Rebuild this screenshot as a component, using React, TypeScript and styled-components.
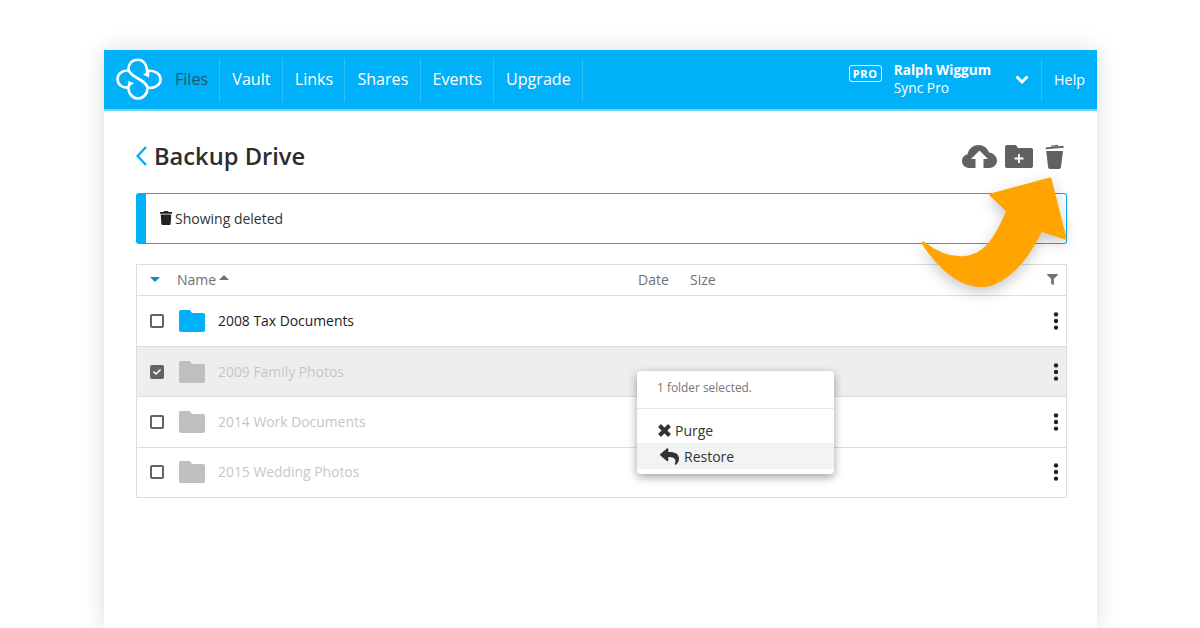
import React from 'react'
import styled, { createGlobalStyle } from 'styled-components'
import { FaCheck, FaFilter, FaReply, FaTrash } from 'react-icons/fa'

const GlobalStyle = createGlobalStyle`
  html, body {
    margin: 0;
    height: 628px;
    overflow: hidden;
    background: #ffffff;
    font-family: "Open Sans", "Liberation Sans", sans-serif;
  }
`

const Frame = styled.div`
  position: relative;
  width: 993px;
  height: 578px;
  margin: 50px 0 0 104px;
  background: #ffffff;
  box-shadow: 0 0 22px rgba(0, 0, 0, 0.14);
`

const Header = styled.header`
  display: flex;
  align-items: center;
  box-sizing: content-box;
  height: 59px;
  background: #00b0f8;
  border-bottom: 2px solid #6fd3fb;
  padding-left: 12px;
`

const Logo = styled.svg`
  width: 47px;
  height: 46px;
  margin-right: 12px;
  flex: none;
`

const NavItem = styled.a<{ $active?: boolean }>`
  display: flex;
  align-items: center;
  height: 44px;
  padding: 0 11.2px 1px 12px;
  box-sizing: border-box;
  border-right: 1px solid #2cc0fa;
  font-size: 16.1px;
  color: ${p => (p.$active ? '#24566f' : '#ffffff')};
  &:first-of-type {
    padding-left: 0;
  }
`

const Spacer = styled.div`
  flex: 1;
`

const ProBadge = styled.span`
  display: flex;
  align-items: center;
  justify-content: center;
  width: 33px;
  height: 17px;
  box-sizing: border-box;
  border: 1px solid #ffffff;
  border-radius: 3px;
  font-size: 11px;
  font-weight: 700;
  letter-spacing: 0.6px;
  color: #ffffff;
  margin: 0 12px 13px 0;
`

const User = styled.div`
  display: flex;
  flex-direction: column;
  color: #ffffff;
  margin-right: 24px;
  margin-bottom: 1px;
`

const UserName = styled.span`
  font-size: 13.6px;
  font-weight: 700;
  line-height: 18px;
`

const UserPlan = styled.span`
  font-size: 13.8px;
  line-height: 18px;
`

const Caret = styled.svg`
  width: 14px;
  height: 10px;
  margin-right: 12px;
`

const HelpLink = styled.a`
  display: flex;
  align-items: center;
  height: 44px;
  padding: 0 12px 1px 12px;
  box-sizing: border-box;
  border-left: 1px solid #2cc0fa;
  font-size: 14.3px;
  color: #ffffff;
`

const Content = styled.main`
  padding: 25px 30px 0 32px;
`

const TitleRow = styled.div`
  display: flex;
  align-items: center;
  justify-content: space-between;
  height: 41px;
  margin-bottom: 16px;
`

const Title = styled.h1`
  display: flex;
  align-items: center;
  gap: 7px;
  margin: 0 0 2px;
  font-size: 23.7px;
  font-weight: 600;
  color: #2d2d2d;
`

const Actions = styled.div`
  display: flex;
  align-items: center;
  margin-right: 3px;
  color: #616161;
`

const CloudIcon = styled.svg`
  width: 35px;
  height: 23px;
  margin-right: 8px;
`

const AddFolderIcon = styled.svg`
  width: 28px;
  height: 23px;
  margin-right: 12px;
`

const TrashIcon = styled.svg`
  width: 19px;
  height: 25px;
`

const Banner = styled.div`
  display: flex;
  align-items: center;
  gap: 2px;
  height: 51px;
  box-sizing: border-box;
  padding: 0 0 1px 13px;
  border: 1px solid #00b0f8;
  border-left: 10px solid #00b0f8;
  border-radius: 3px;
  font-size: 14px;
  color: #333333;
  margin-bottom: 20px;
`

const Table = styled.div`
  border: 1px solid #dddddd;
  color: #333333;
`

const HeadRow = styled.div`
  display: grid;
  grid-template-columns: 40px 461px 52px 1fr 19px;
  align-items: center;
  height: 30.5px;
  box-sizing: border-box;
  border-bottom: 1px solid #dddddd;
  font-size: 14px;
  color: #6f7174;
`

const HeadToggle = styled.span`
  justify-self: center;
  width: 0;
  height: 0;
  margin: 0 5px 0 0;
  border-left: 5px solid transparent;
  border-right: 5px solid transparent;
  border-top: 5px solid #0a8bd0;
`

const NameHead = styled.span`
  display: flex;
  align-items: center;
  gap: 3px;
`

const SortUp = styled.span`
  width: 0;
  height: 0;
  margin-bottom: 5px;
  border-left: 5px solid transparent;
  border-right: 5px solid transparent;
  border-bottom: 5px solid #6f7174;
`

const Rows = styled.div``

const Row = styled.div<{ $selected?: boolean }>`
  display: flex;
  align-items: center;
  height: 50.4px;
  box-sizing: border-box;
  padding: 0 2px 0 13px;
  border-top: 1px solid #dddddd;
  background: ${p => (p.$selected ? '#eeeeee' : '#ffffff')};
  &:first-of-type {
    border-top: none;
  }
`

const Check = styled.span<{ $checked?: boolean }>`
  display: flex;
  align-items: center;
  justify-content: center;
  width: 14px;
  height: 14px;
  box-sizing: border-box;
  border: 2px solid #636363;
  border-radius: 2px;
  background: ${p => (p.$checked ? '#636363' : '#ffffff')};
  color: #ffffff;
  margin-right: 15px;
`

const FolderIcon = styled.svg<{ $muted?: boolean }>`
  width: 26px;
  height: 22px;
  color: ${p => (p.$muted ? '#bfbfbf' : '#00b0f8')};
  margin-right: 13px;
`

const FileName = styled.span<{ $muted?: boolean }>`
  flex: 1;
  margin-bottom: 1px;
  font-size: 13.9px;
  color: ${p => (p.$muted ? '#c6c6c6' : '#222222')};
`

const RowMenu = styled.svg`
  width: 16px;
  height: 18px;
  color: #222222;
`

const Menu = styled.div`
  position: absolute;
  left: 533px;
  top: 321px;
  width: 197px;
  height: 103px;
  background: #ffffff;
  border-radius: 4px;
  box-shadow: 0 3px 10px rgba(0, 0, 0, 0.38);
`

const MenuNote = styled.div`
  display: flex;
  align-items: center;
  height: 37px;
  box-sizing: content-box;
  padding: 0 20px;
  border-bottom: 1px solid #e6e6e6;
  font-size: 11.9px;
  color: #777777;
  span {
    margin-bottom: 5px;
  }
`

const MenuList = styled.div`
  padding-top: 8px;
`

const MenuItem = styled.div<{ $hover?: boolean; $inset: number; $gap: number }>`
  display: flex;
  align-items: center;
  gap: ${p => p.$gap}px;
  height: 26px;
  box-sizing: border-box;
  padding-left: ${p => p.$inset}px;
  font-size: 14px;
  color: #333333;
  background: ${p => (p.$hover ? '#f3f3f3' : 'transparent')};
`

const Arrow = styled.svg`
  position: absolute;
  left: 800px;
  top: 110px;
  width: 190px;
  height: 140px;
  overflow: visible;
  filter: drop-shadow(0 5px 7px rgba(0, 0, 0, 0.22));
`

const SyncLogo = () => (
  <Logo viewBox="0 0 47 46" fill="none" stroke="#fff" strokeWidth="2.6">
    <path d="M31 18 C32 8 27.5 2.7 21.7 2.7 C16 2.7 12.5 7 12.5 12 C12.5 20 31.5 23 31.5 31 C31.5 37 27 41.5 22 41.5 C17 41.5 12.5 37 12.5 31 C12.5 29 13 27.5 14 26" />
    <path d="M12.5 13.5 C6 13 1.5 17 1.5 22 C1.5 27 6 31.5 12.5 30.5" />
    <path d="M31 14 C37 13 44.5 16 44.5 22.5 C44.5 28 38 32 31.5 30.5" />
    <path fill="#fff" stroke="none" d="M12 24 L18 26 L13.5 29.5 Z M27 17.5 L33.5 14.5 L33 20.5 Z" />
  </Logo>
)

const Folder = ({ muted }: { muted?: boolean }) => (
  <FolderIcon $muted={muted} viewBox="0 0 26 22" fill="currentColor">
    <path d="M2 0 H10 C11 0 11.6 .6 12 1.4 L13 3 H24 C25.2 3 26 3.8 26 5 V20 C26 21.2 25.2 22 24 22 H2 C.8 22 0 21.2 0 20 V2 C0 .8 .8 0 2 0 Z" />
  </FolderIcon>
)

const PurgeIcon = () => (
  <svg width="13" height="13" viewBox="0 0 13 13" fill="none" stroke="#333" strokeWidth="4">
    <path d="M1.5 1.5 L11.5 11.5 M11.5 1.5 L1.5 11.5" />
  </svg>
)

const rows = [
  { name: '2008 Tax Documents' },
  { name: '2009 Family Photos', muted: true, selected: true },
  { name: '2014 Work Documents', muted: true },
  { name: '2015 Wedding Photos', muted: true },
]

const navItems = ['Vault', 'Links', 'Shares', 'Events', 'Upgrade']

export default function App() {
  return (
    <>
      <GlobalStyle />
      <Frame>
        <Header>
          <SyncLogo />
          <NavItem $active>Files</NavItem>
          {navItems.map(item => (
            <NavItem key={item}>{item}</NavItem>
          ))}
          <Spacer />
          <ProBadge>PRO</ProBadge>
          <User>
            <UserName>Ralph Wiggum</UserName>
            <UserPlan>Sync Pro</UserPlan>
          </User>
          <Caret viewBox="0 0 14 10" fill="none" stroke="#fff" strokeWidth="3">
            <path d="M1.5 1.5 L7 7 L12.5 1.5" />
          </Caret>
          <HelpLink>Help</HelpLink>
        </Header>
        <Content>
          <TitleRow>
            <Title>
              <svg width="11" height="20" viewBox="0 0 11 20" fill="none" stroke="#00b0f8" strokeWidth="2.4">
                <path d="M10 1 L1.6 10 L10 19" />
              </svg>
              Backup Drive
            </Title>
            <Actions>
              <CloudIcon viewBox="0 0 35 23">
                <path
                  fill="currentColor"
                  d="M7.5 23 C3 23 0 19.8 0 16 C0 12.6 2.4 9.8 5.6 9.2 C6.4 4 11 0 16.5 0 C21.4 0 25.4 3 27 7.4 C31.4 7.8 35 11.4 35 15.6 C35 19.8 31.6 23 27.5 23 Z"
                />
                <path fill="#fff" d="M17.5 5.5 L26 14 H21.5 V23 H13.5 V14 H9 Z" />
              </CloudIcon>
              <AddFolderIcon viewBox="0 0 28 23">
                <path
                  fill="currentColor"
                  d="M2 0 H10 C11 0 11.6 .6 12 1.4 L13 3 H26 C27.2 3 28 3.8 28 5 V21 C28 22.2 27.2 23 26 23 H2 C.8 23 0 22.2 0 21 V2 C0 .8 .8 0 2 0 Z"
                />
                <path stroke="#fff" strokeWidth="1.8" d="M14 9 V18 M9.5 13.5 H18.5" />
              </AddFolderIcon>
              <TrashIcon viewBox="0 0 19 25" fill="currentColor">
                <path d="M.6 3.4 L18.4 1.8 L18.8 3.8 L.8 5.2 Z M5.8 1.8 L13 .8 L13.4 2 L6 2.8 Z" />
                <path d="M1.2 7 H18 L16 23 C15.9 24.3 15 25 14 25 H5 C4 25 3.2 24.3 3.1 23 Z" />
              </TrashIcon>
            </Actions>
          </TitleRow>
          <Banner>
            <FaTrash size={14} color="#222" />
            Showing deleted
          </Banner>
          <Table>
            <HeadRow>
              <HeadToggle />
              <NameHead>
                Name
                <SortUp />
              </NameHead>
              <span>Date</span>
              <span>Size</span>
              <FaFilter size={11} />
            </HeadRow>
            <Rows>
              {rows.map(r => (
                <Row key={r.name} $selected={r.selected}>
                  <Check $checked={r.selected}>{r.selected && <FaCheck size={8} />}</Check>
                  <Folder muted={r.muted} />
                  <FileName $muted={r.muted}>{r.name}</FileName>
                  <RowMenu viewBox="0 0 16 18" fill="currentColor">
                    <circle cx="8" cy="2.4" r="2.2" />
                    <circle cx="8" cy="9" r="2.2" />
                    <circle cx="8" cy="15.6" r="2.2" />
                  </RowMenu>
                </Row>
              ))}
            </Rows>
          </Table>
        </Content>
        <Menu>
          <MenuNote>
            <span>1 folder selected.</span>
          </MenuNote>
          <MenuList>
            <MenuItem $inset={21} $gap={4}>
              <PurgeIcon />
              Purge
            </MenuItem>
            <MenuItem $hover $inset={23} $gap={5}>
              <FaReply size={19} />
              Restore
            </MenuItem>
          </MenuList>
        </Menu>
        <Arrow viewBox="0 0 190 140">
          <path
            fill="#ffa400"
            strokeLinejoin="round"
            stroke="#ffa400"
            strokeWidth="3"
            d="M19 83 C40 99 58 101 73 94 C88 87 96 68 104 51 L87 35 L146 19 L161 78 L137 70 C126 92 112 114 88 124 C62 131 38 112 19 83 Z"
          />
        </Arrow>
      </Frame>
    </>
  )
}
